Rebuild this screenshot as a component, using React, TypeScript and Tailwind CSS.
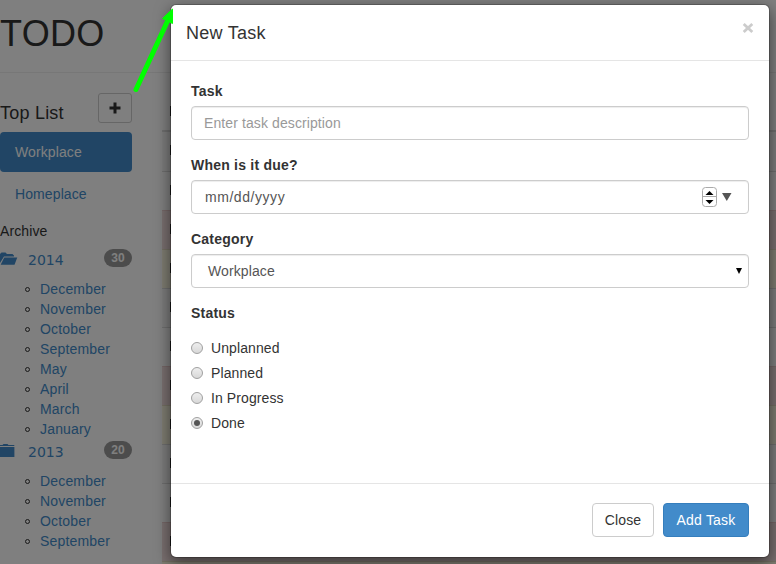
import React from "react";

const months2014 = ["December", "November", "October", "September", "May", "April", "March", "January"];
const months2013 = ["December", "November", "October", "September"];

const rows = [
  "h-[39px] bg-[#f9f9f9]",
  "h-[39px] bg-white border-t border-[#ddd]",
  "h-[39px] bg-[#f2dede] border-t border-[#ebcccc]",
  "h-[39px] bg-[#fcf8e3] border-t border-[#e6dfc4]",
  "h-[39px] bg-[#f9f9f9] border-t border-[#ddd]",
  "h-[39px] bg-white border-t border-[#ddd]",
  "h-[39px] bg-[#f2dede] border-t border-[#ebcccc]",
  "h-[39px] bg-[#fcf8e3] border-t border-[#e6dfc4]",
  "h-[39px] bg-[#f9f9f9] border-t border-[#ddd]",
  "h-[39px] bg-white border-t border-[#ddd]",
  "h-[39px] bg-[#f2dede] border-t border-[#ebcccc]",
  "h-[39px] bg-[#fcf8e3] border-t border-[#e6dfc4]",
];

function FolderOpen() {
  return (
    <svg width="18" height="14" viewBox="0 0 18 14" className="block" fill="#428bca">
      <path d="M0 3V2L1.5 0.5H5.5L7 2H12.5L14 3.5V4.5H4L0 11Z" />
      <path d="M4.3 5.5H17.3L14.5 12.8H0.6Z" />
    </svg>
  );
}

function FolderClosed() {
  return (
    <svg width="18" height="14" viewBox="0 0 18 14" className="block" fill="#428bca">
      <path d="M0 1H2.5L3.5 0H7.5L8.5 1H14.3V2H0Z" />
      <path d="M0 3H14.4V13H0Z" />
    </svg>
  );
}

function Archive({ year, count, open, months }: { year: string; count: number; open?: boolean; months: string[] }) {
  return (
    <div>
      <div className="flex h-8 w-[132px] items-start text-[#428bca]">
        <div className="w-7 pt-[5px]">{open ? <FolderOpen /> : <FolderClosed />}</div>
        <span className="pt-[3px] font-['DejaVu_Sans',sans-serif] tracking-normal">{year}</span>
        <span className="ml-auto mt-[2px] flex h-[18px] w-7 items-center justify-center rounded-[10px] bg-[#999] text-xs font-bold text-white">
          {count}
        </span>
      </div>
      <ul>
        {months.map((m) => (
          <li key={m} className="flex h-5 items-center pl-[25px]">
            <span className="mr-2.5 mt-px h-[5px] w-[5px] rounded-full border border-[#333]" />
            <span className="tracking-[0.17px] text-[#428bca]">{m}</span>
          </li>
        ))}
      </ul>
    </div>
  );
}

function Field({ label, children }: { label: string; children: React.ReactNode }) {
  return (
    <div className="mb-[15px]">
      <div className="mb-[5px] h-5 font-bold tracking-[0.22px]">{label}</div>
      <div className="flex h-[34px] items-center rounded border border-[#ccc] px-3 text-[#555] shadow-[inset_0_1px_1px_rgba(0,0,0,0.075)]">
        {children}
      </div>
    </div>
  );
}

function Radio({ label, checked }: { label: string; checked?: boolean }) {
  return (
    <div className="mb-[5px] flex h-5 items-center">
      <span className="mr-2 flex h-3 w-3 items-center justify-center rounded-full border border-[#a0a0a0] bg-linear-to-b from-[#eee] to-[#d8d8d8]">
        {checked && <span className="h-1.5 w-1.5 rounded-full bg-[#555]" />}
      </span>
      {label}
    </div>
  );
}

export default function App() {
  return (
    <div className="relative h-[564px] w-[776px] overflow-hidden bg-white font-['Liberation_Sans',Arial,sans-serif] text-sm leading-5 tracking-[0.1px] text-[#333]">
      <header className="h-[73px] border-b border-[#eee] pt-[14px]">
        <h1 className="text-4xl leading-10 tracking-[0.3px]">TODO</h1>
      </header>
      <div className="flex">
        <aside className="w-[162px] shrink-0 pt-5">
          <div className="flex h-[39px] w-[132px] items-start justify-between">
            <h2 className="pt-[10px] text-lg leading-5 tracking-[0.22px]">Top List</h2>
            <div className="flex h-[30px] w-[34px] items-center justify-center rounded-[3px] border border-[#ccc]">
              <svg width="12" height="12" viewBox="0 0 12 12" fill="#333" className="-ml-px -mt-px">
                <path d="M4.5 0.5h3v4h4v3h-4v4h-3v-4h-4v-3h4z" />
              </svg>
            </div>
          </div>
          <div className="h-10 w-[132px] rounded bg-[#428bca] px-[15px] py-2.5 text-white">Workplace</div>
          <div className="mt-0.5 h-10 px-[15px] py-2.5 text-[#428bca]">Homeplace</div>
          <div className="mb-1.5 mt-[7px]">Archive</div>
          <Archive year="2014" count={30} open months={months2014} />
          <Archive year="2013" count={20} months={months2013} />
        </aside>
        <main className="flex-1 pt-[20px]">
          <div className="h-[39px] border-b-2 border-[#ddd] pl-2 pt-[13px]">
            <div className="h-2.5 w-0.5 bg-[#333]" />
          </div>
          {rows.map((r, i) => (
            <div key={i} className={r}>
              <div className="pl-2 pt-[13px]">
                <div className="h-2.5 w-0.5 bg-[#333]" />
              </div>
            </div>
          ))}
        </main>
      </div>

      <div className="absolute inset-0 bg-black/50" />

      <section className="absolute left-[170px] top-1 flex h-[554px] w-[600px] flex-col rounded-md border border-black/20 bg-white bg-clip-padding shadow-[0_5px_15px_rgba(0,0,0,0.5)]">
        <div className="flex h-14 shrink-0 justify-between border-b border-[#e5e5e5] p-[15px]">
          <h4 className="text-lg leading-[26px] tracking-[0.25px]">New Task</h4>
          <svg width="12" height="12" viewBox="0 0 12 12" className="mt-[2px]" stroke="#ccc" strokeWidth="2.8">
            <path d="M1.7 2L10.3 10M10.3 2L1.7 10" />
          </svg>
        </div>
        <div className="flex-1 px-5 pt-5">
          <Field label="Task">
            <span className="text-[#999]">Enter task description</span>
          </Field>
          <Field label="When is it due?">
            <span className="pl-px tracking-[0.55px]">mm/dd/yyyy</span>
            <svg width="32" height="20" viewBox="0 0 32 20" className="ml-auto mr-[2px]">
              <rect x="0.5" y="0.5" width="14" height="19" rx="3" fill="white" stroke="#aaa" />
              <path d="M1 9.5H14" stroke="#aaa" />
              <path d="M3.5 8L7.5 4L11.5 8ZM3.5 13L7.5 17L11.5 13Z" fill="#000" />
              <path d="M20 6H29.5L24.75 14Z" fill="#555" />
            </svg>
          </Field>
          <Field label="Category">
            <span className="pl-1">Workplace</span>
            <svg width="6" height="6" viewBox="0 0 6 6" className="-mr-[6px] ml-auto">
              <path d="M0 0H6L3 6Z" fill="#000" />
            </svg>
          </Field>
          <div className="mb-[15px] font-bold tracking-[0.22px]">Status</div>
          <Radio label="Unplanned" />
          <Radio label="Planned" />
          <Radio label="In Progress" />
          <Radio label="Done" checked />
        </div>
        <div className="flex h-[74px] shrink-0 justify-end gap-[9px] border-t border-[#e5e5e5] px-5 pt-[19px]">
          <button className="h-[34px] w-[62px] rounded border border-[#ccc] bg-white">Close</button>
          <button className="h-[34px] w-[86px] rounded border border-[#357ebd] bg-[#428bca] text-white tracking-[0.2px]">
            Add Task
          </button>
        </div>
      </section>

      <svg className="absolute left-0 top-0" width="180" height="100" viewBox="0 0 180 100">
        <path d="M136 89.5L168 20" stroke="#0f0" strokeWidth="5" strokeLinecap="round" />
        <path d="M172.5 9V23.5L162.5 18.5Z" fill="#0f0" stroke="#0f0" />
      </svg>
    </div>
  );
}
